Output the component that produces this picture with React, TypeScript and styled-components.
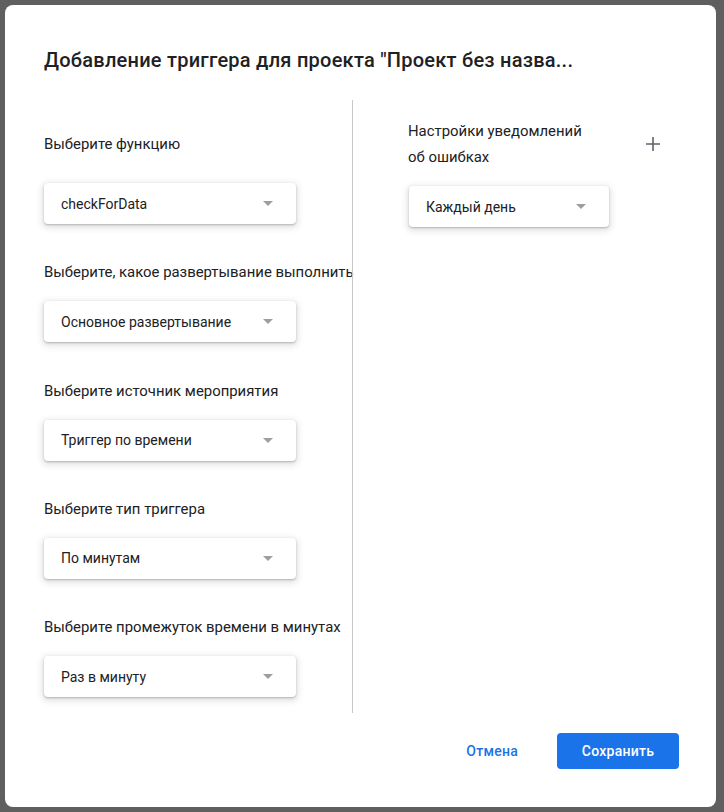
import React from 'react';
import styled, { createGlobalStyle } from 'styled-components';

const GlobalStyle = createGlobalStyle`
  html, body {
    margin: 0;
    padding: 0;
    background: #5f5f5f;
  }
  body {
    font-family: Roboto, 'Noto Sans', Arial, sans-serif;
    color: #202124;
  }
`;

const Backdrop = styled.div`
  padding: 5px 8px 5px 5px;
  min-height: 812px;
  box-sizing: border-box;
`;

const Dialog = styled.div`
  width: 711px;
  height: 802px;
  background: #fff;
  border-radius: 8px;
  box-sizing: border-box;
  padding: 41px 37px 38px 39px;
  display: flex;
  flex-direction: column;
`;

const Title = styled.h1`
  margin: 0;
  font-size: 20px;
  line-height: 28px;
  font-weight: 500;
  letter-spacing: 0.24px;
  color: #202124;
  white-space: nowrap;
`;

const Body = styled.div`
  display: flex;
  margin-top: 26px;
  height: 613px;
`;

const LeftColumn = styled.div`
  width: 308px;
  padding-top: 34px;
  display: flex;
  flex-direction: column;
  gap: 38.25px;
`;

const Divider = styled.div`
  width: 1px;
  background: #c8c8c8;
`;

const RightColumn = styled.div`
  flex: 1;
  padding: 18px 0 0 55px;
`;

const Field = styled.div<{ $labelGap: number }>`
  display: flex;
  flex-direction: column;
  gap: ${({ $labelGap }) => $labelGap}px;
`;

const Label = styled.div`
  font-size: 14.9px;
  line-height: 20px;
  color: #202124;
  white-space: nowrap;
`;

const NotifyHeader = styled.div`
  display: flex;
  justify-content: space-between;
  align-items: center;
  padding-right: 18px;
`;

const NotifyLabel = styled.div`
  font-size: 14.9px;
  line-height: 26px;
  color: #202124;
`;

const PlusButton = styled.button`
  border: none;
  background: none;
  padding: 0;
  width: 16px;
  height: 16px;
  display: flex;
  align-items: center;
  justify-content: center;
  cursor: pointer;
`;

const Select = styled.div<{ $width: number; $offset?: number }>`
  width: ${({ $width }) => $width}px;
  height: 41px;
  margin-left: ${({ $offset = 0 }) => $offset}px;
  box-sizing: border-box;
  padding: 0 23px 0 17px;
  display: flex;
  align-items: center;
  justify-content: space-between;
  background: #fff;
  border-radius: 4px;
  box-shadow: 0 1px 2px 0 rgba(60, 64, 67, 0.3),
    0 2px 6px 2px rgba(60, 64, 67, 0.15);
  font-size: 14px;
  color: #202124;
  cursor: pointer;
`;

const Caret = styled.span`
  width: 0;
  height: 0;
  border-left: 5px solid transparent;
  border-right: 5px solid transparent;
  border-top: 5px solid #9e9e9e;
`;

const Footer = styled.div`
  display: flex;
  justify-content: flex-end;
  align-items: center;
  gap: 15px;
  margin-top: 20px;
`;

const Button = styled.button<{ $primary?: boolean }>`
  height: 36px;
  padding: 0 24px;
  border: none;
  border-radius: 4px;
  font-family: Roboto, Arial, sans-serif;
  font-size: 14px;
  font-weight: 500;
  letter-spacing: 0.25px;
  cursor: pointer;
  background: ${({ $primary }) => ($primary ? '#1a73e8' : 'transparent')};
  color: ${({ $primary }) => ($primary ? '#fff' : '#1a73e8')};
  min-width: ${({ $primary }) => ($primary ? '122px' : 'auto')};
`;

const fields = [
  { label: 'Выберите функцию', value: 'checkForData', gap: 29 },
  { label: 'Выберите, какое развертывание выполнить', value: 'Основное развертывание', gap: 19 },
  { label: 'Выберите источник мероприятия', value: 'Триггер по времени', gap: 19 },
  { label: 'Выберите тип триггера', value: 'По минутам', gap: 19 },
  { label: 'Выберите промежуток времени в минутах', value: 'Раз в минуту', gap: 19 },
];

const Dropdown = ({ value, width, offset }: { value: string; width: number; offset?: number }) => (
  <Select $width={width} $offset={offset}>
    <span>{value}</span>
    <Caret />
  </Select>
);

export default function App() {
  return (
    <>
      <GlobalStyle />
      <Backdrop>
        <Dialog>
          <Title>Добавление триггера для проекта "Проект без назва...</Title>
          <Body>
            <LeftColumn>
              {fields.map((f) => (
                <Field key={f.label} $labelGap={f.gap}>
                  <Label>{f.label}</Label>
                  <Dropdown value={f.value} width={252} />
                </Field>
              ))}
            </LeftColumn>
            <Divider />
            <RightColumn>
              <Field $labelGap={16}>
                <NotifyHeader>
                  <NotifyLabel>
                    Настройки уведомлений
                    <br />
                    об ошибках
                  </NotifyLabel>
                  <PlusButton aria-label="Добавить">
                    <svg width="14" height="14" viewBox="0 0 14 14">
                      <path d="M7 0v14M0 7h14" stroke="#5f6368" strokeWidth="1.6" />
                    </svg>
                  </PlusButton>
                </NotifyHeader>
                <Dropdown value="Каждый день" width={200} offset={1} />
              </Field>
            </RightColumn>
          </Body>
          <Footer>
            <Button>Отмена</Button>
            <Button $primary>Сохранить</Button>
          </Footer>
        </Dialog>
      </Backdrop>
    </>
  );
}
